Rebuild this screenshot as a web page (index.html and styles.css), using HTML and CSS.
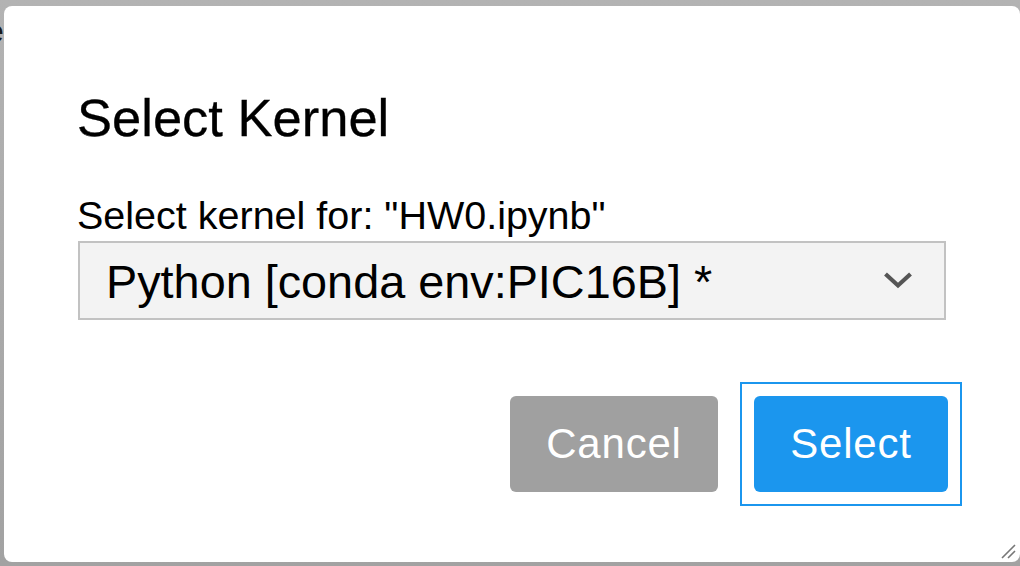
FILE: index.html
```html
<!DOCTYPE html>
<html>
<head>
<meta charset="utf-8">
<link rel="stylesheet" href="styles.css">
</head>
<body>
<span class="behind-text">e</span>
<div class="dialog">
  <h1 class="title">Select Kernel</h1>
  <label class="label">Select kernel for: "HW0.ipynb"</label>
  <div class="select">
    <span class="select-text">Python [conda env:PIC16B] *</span>
    <svg class="chevron" width="30" height="18" viewBox="0 0 30 18"><path d="M2.5 3 L15 14.5 L27.5 3" fill="none" stroke="#555" stroke-width="4.2"/></svg>
  </div>
  <div class="actions">
    <button class="btn btn-cancel">Cancel</button>
    <button class="btn btn-select">Select</button>
  </div>
  <svg class="grip" width="18" height="18" viewBox="0 0 18 18"><path d="M3 16 L16 3 M9 16 L16 9" stroke="#777" stroke-width="1.6" fill="none"/></svg>
</div>
</body>
</html>
```
FILE: styles.css
```css
html, body {
  margin: 0;
  padding: 0;
}
body {
  width: 1020px;
  height: 566px;
  overflow: hidden;
  background: linear-gradient(#b3b3b3, #a2a2a2);
  font-family: "Liberation Sans", Arial, sans-serif;
  position: relative;
}
.behind-text {
  position: absolute;
  left: -14px;
  top: 13px;
  font-size: 32px;
  color: #1a1a1a;
}
.dialog {
  position: relative;
  margin: 6px 0 0 4px;
  width: 1016px;
  height: 556px;
  box-sizing: border-box;
  background: #fff;
  border-radius: 8px;
  padding: 0 74px;
  display: flex;
  flex-direction: column;
}
.title {
  margin: 86px 0 0 -1px;
  font-size: 52.5px;
  line-height: 52px;
  font-weight: normal;
  color: #000;
  -webkit-text-stroke: 0.3px #000;
}
.label {
  margin-top: 52px;
  margin-left: -1px;
  font-size: 39.5px;
  line-height: 39px;
  color: #000;
}
.select {
  margin-top: 6px;
  height: 79px;
  box-sizing: border-box;
  border: 2px solid #c2c2c2;
  background: #f3f3f3;
  display: flex;
  align-items: center;
  justify-content: space-between;
  padding: 3px 31px 0 26px;
}
.select-text {
  font-size: 46.8px;
  color: #000;
}
.chevron {
  display: block;
  margin-top: -4px;
}
.actions {
  margin-top: 76px;
  display: flex;
  justify-content: flex-end;
  gap: 36px;
  margin-right: -2px;
}
.btn {
  height: 96px;
  border: none;
  border-radius: 6px;
  color: #fff;
  font-family: "Liberation Sans", Arial, sans-serif;
  font-size: 42px;
  letter-spacing: 0.8px;
  padding: 0;
}
.btn-cancel {
  width: 208px;
  background: #a0a0a0;
}
.btn-select {
  position: relative;
  width: 194px;
  background: #1b96ee;
  outline: none;
}
.btn-select::after {
  content: "";
  position: absolute;
  left: -14px;
  top: -14px;
  right: -14px;
  bottom: -14px;
  border: 2px solid #1b96ee;
  pointer-events: none;
}
.grip {
  position: absolute;
  right: 3px;
  bottom: 2px;
}
```
